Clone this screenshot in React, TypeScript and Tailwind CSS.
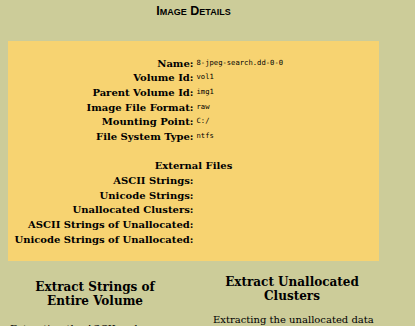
const details = [
  { label: "Name:", value: "8-jpeg-search.dd-0-0" },
  { label: "Volume Id:", value: "vol1" },
  { label: "Parent Volume Id:", value: "img1" },
  { label: "Image File Format:", value: "raw" },
  { label: "Mounting Point:", value: "C:/" },
  { label: "File System Type:", value: "ntfs" },
];

const externals = [
  "ASCII Strings:",
  "Unicode Strings:",
  "Unallocated Clusters:",
  "ASCII Strings of Unallocated:",
  "Unicode Strings of Unallocated:",
];

function Row({ label, value }: { label: string; value?: string }) {
  return (
    <div className="grid grid-cols-2 h-[14.7px] items-center">
      <div className="text-right font-bold text-[10px]">{label}</div>
      <div className="pl-[3px] text-[7.2px] font-['DejaVu_Sans_Mono',monospace]">{value}</div>
    </div>
  );
}

export default function App() {
  return (
    <div className="w-[415px] h-[326px] overflow-hidden bg-[#cccc99] text-black font-['DejaVu_Serif',serif]">
      <div className="w-[387px] pt-[4px] h-[41px] text-center leading-[12.5px]">
        <span className="font-['Liberation_Sans',Arial,sans-serif] font-bold text-[12.5px] [font-variant:small-caps]">
          Image Details
        </span>
      </div>
      <div className="ml-[8px] w-[371px] bg-[#f7d371] py-[14.6px]">
        {details.map((d) => (
          <Row key={d.label} label={d.label} value={d.value} />
        ))}
        <div className="h-[14.7px]" />
        <div className="h-[14.7px] flex items-center justify-center font-bold text-[10px]">External Files</div>
        {externals.map((l) => (
          <Row key={l} label={l} />
        ))}
      </div>
      <div className="flex ml-[10px] gap-[33px] pt-[18px]">
        <div className="w-[170px]">
          <h3 className="text-center font-bold text-[12px] leading-[14px] px-[20px] mt-[1px]">Extract Strings of Entire Volume</h3>
          <p className="text-[10px] mt-[13px]">Extracting the ASCII and Unicode strings from a file system</p>
        </div>
        <div className="w-[164px] -mt-[4px]">
          <h3 className="text-center font-bold text-[12px] leading-[14px] pr-[6px]">Extract Unallocated Clusters</h3>
          <p className="text-[10px] mt-[9px]">Extracting the unallocated data in a file system</p>
        </div>
      </div>
    </div>
  );
}
